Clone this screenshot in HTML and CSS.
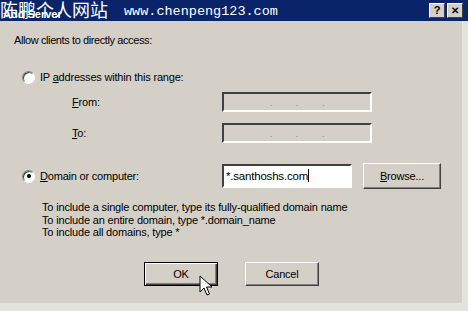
FILE: index.html
```html
<!DOCTYPE html>
<html lang="en">
<head>
  <meta charset="UTF-8" />
  <title>Add Server</title>
  <link rel="stylesheet" href="styles.css">
</head>
<body>
  <div class="dialog">
    <div class="title-bar">
      <span class="title-text">Add Server</span>
      <span class="watermark">陈鹏个人网站<span class="wm-url">www.chenpeng123.com</span></span>
      <div class="title-buttons">
        <span class="tb-btn">?</span>
        <span class="tb-btn tb-close">✕</span>
      </div>
    </div>

    <div class="dialog-body">
      <p class="intro">Allow clients to directly access:</p>

      <div class="option-row">
        <span class="radio"></span>
        <span class="label">IP <u>a</u>ddresses within this range:</span>
      </div>

      <div class="field-row">
        <span class="field-label"><u>F</u>rom:</span>
        <div class="ip-box"><span>.</span><span>.</span><span>.</span></div>
      </div>
      <div class="field-row">
        <span class="field-label"><u>T</u>o:</span>
        <div class="ip-box"><span>.</span><span>.</span><span>.</span></div>
      </div>

      <div class="option-row domain-row">
        <span class="radio checked"></span>
        <span class="label"><u>D</u>omain or computer:</span>
        <div class="text-box">*.santhoshs.com<span class="caret"></span></div>
        <button class="btn browse"><u>B</u>rowse...</button>
      </div>

      <div class="hint">
        <div>To include a single computer, type its fully-qualified domain name</div>
        <div>To include an entire domain, type *.domain_name</div>
        <div>To include all domains, type *</div>
      </div>

      <div class="actions">
        <button class="btn default">OK</button>
        <button class="btn">Cancel</button>
        <svg class="cursor" width="14" height="22" viewBox="0 0 14 22">
          <path d="M1 1 L1 17 L5 13 L8 20 L10.5 19 L7.5 12 L13 12 Z" fill="#fff" stroke="#000" stroke-width="1"/>
        </svg>
      </div>
    </div>
  </div>
</body>
</html>
```

FILE: styles.css
```css
body {
  margin: 0;
  background: #e4e2dc;
  font-family: "Liberation Sans", Arial, sans-serif;
  font-size: 11px;
  color: #000;
}

.dialog {
  width: 462px;
  height: 303px;
  background: #d4d0c8;
  position: relative;
}

.title-bar {
  height: 21px;
  width: 468px;
  background: #0a246a;
  display: flex;
  align-items: center;
  position: relative;
  overflow: hidden;
}

.title-text {
  color: #fff;
  font-weight: bold;
  font-size: 11px;
  align-self: flex-end;
  margin: 0 0 1px 3px;
}

.watermark {
  position: absolute;
  left: 0;
  top: -4px;
  color: #fff;
  font-family: "Noto Sans CJK SC", sans-serif;
  font-size: 18px;
  white-space: nowrap;
}

.wm-url {
  font-family: "Liberation Mono", monospace;
  font-size: 13.5px;
  margin-left: 16px;
  vertical-align: 2px;
}

.title-buttons {
  margin-left: auto;
  margin-right: 5px;
  display: flex;
  gap: 2px;
}

.tb-btn {
  width: 14px;
  height: 13px;
  background: #d4d0c8;
  border: 1px solid;
  border-color: #fff #404040 #404040 #fff;
  font-weight: bold;
  font-size: 11px;
  line-height: 13px;
  text-align: center;
}

.tb-close {
  font-size: 10px;
}

.dialog-body {
  padding: 0 0 0 14px;
  font-size: 11px;
  letter-spacing: -0.2px;
}

.intro {
  margin: 13px 0 0 0;
  letter-spacing: -0.4px;
}

.option-row {
  display: flex;
  align-items: center;
  margin: 24px 0 0 8px;
  height: 14px;
}

.radio {
  width: 11px;
  height: 11px;
  border-radius: 50%;
  background: #fff;
  border: 1px solid;
  border-color: #808080 #fff #fff #808080;
  box-shadow: inset 1px 1px 0 #404040;
  margin-right: 5px;
  position: relative;
}

.radio.checked::after {
  content: "";
  position: absolute;
  left: 3.5px;
  top: 3.5px;
  width: 4px;
  height: 4px;
  border-radius: 50%;
  background: #000;
}

.field-row {
  display: flex;
  align-items: center;
  margin-top: 8px;
  height: 20px;
}

.field-row + .field-row {
  margin-top: 11px;
}

.field-label {
  width: 208px;
  padding-left: 58px;
  box-sizing: border-box;
}

.ip-box {
  width: 150px;
  height: 20px;
  box-sizing: border-box;
  border: 2px solid;
  border-color: #404040 #fff #fff #404040;
  display: flex;
  justify-content: space-evenly;
  color: #808080;
  font-size: 9px;
  line-height: 18px;
  padding: 0 22px;
}

.domain-row {
  margin-top: 20px;
  height: 26px;
}

.domain-row .label {
  width: 182px;
  flex: none;
}

.text-box {
  width: 130px;
  height: 24px;
  box-sizing: border-box;
  background: #fff;
  border: 2px solid;
  border-color: #404040 #fff #fff #404040;
  padding-left: 2px;
  line-height: 20px;
  font-size: 11.5px;
}

.caret {
  display: inline-block;
  width: 1px;
  height: 13px;
  background: #000;
  vertical-align: -2px;
}

.btn {
  font-family: "Liberation Sans", Arial, sans-serif;
  font-size: 11px;
  letter-spacing: -0.2px;
  color: #000;
  background: #d4d0c8;
  border: 1px solid;
  border-color: #fff #404040 #404040 #fff;
  box-shadow: inset -1px -1px 0 #808080;
  height: 26px;
  padding: 0;
}

.browse {
  width: 78px;
  margin-left: 11px;
}

.hint {
  margin: 12px 0 0 28px;
  line-height: 12.5px;
  letter-spacing: -0.17px;
}

.actions {
  display: flex;
  gap: 27px;
  margin: 23px 0 0 130px;
  position: relative;
}

.actions .btn {
  width: 74px;
  height: 24px;
}

.btn.default {
  border: 1px solid #000;
  box-shadow: inset 1px 1px 0 #fff, inset -1px -1px 0 #404040, inset -2px -2px 0 #808080;
}

.cursor {
  position: absolute;
  left: 55px;
  top: 13px;
}
```
